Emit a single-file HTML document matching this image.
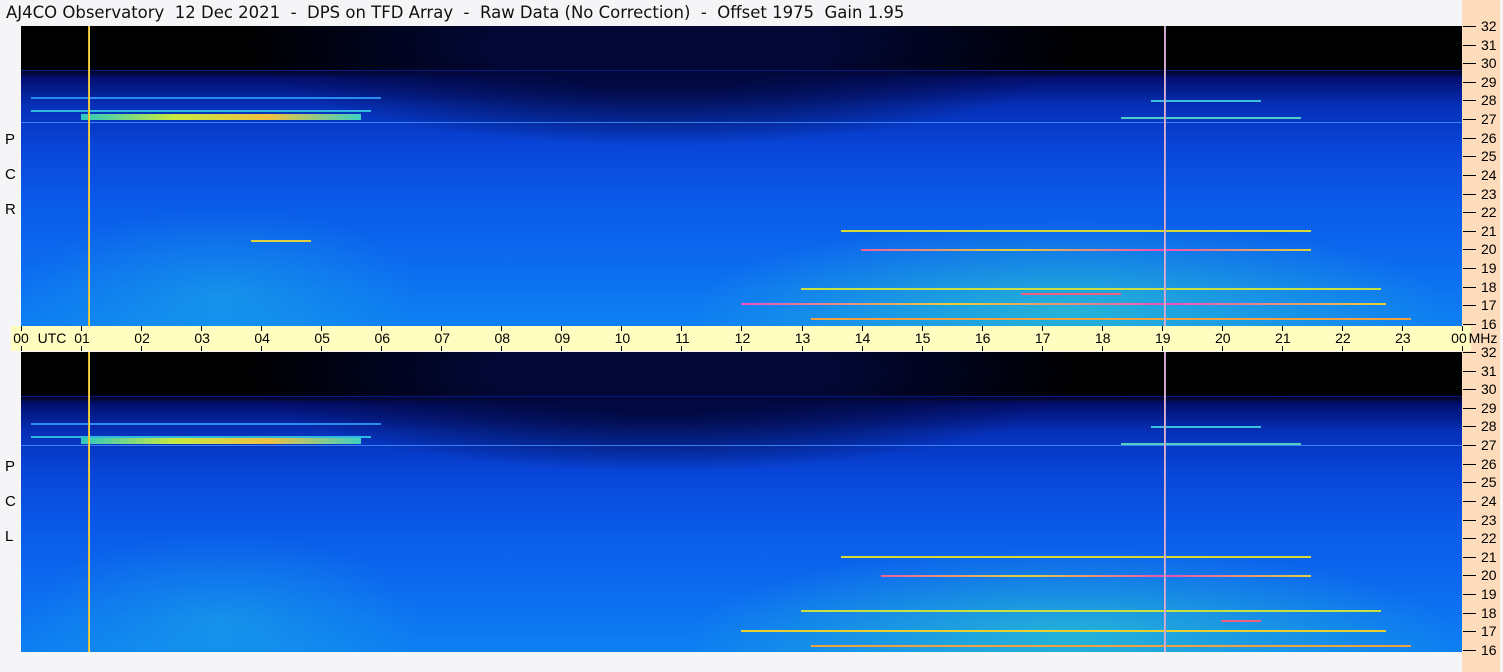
<!DOCTYPE html><html><head><style>
body{margin:0;width:1503px;height:672px;background:#f5f5f8;position:relative;overflow:hidden;font-family:"Liberation Sans","DejaVu Sans",sans-serif}
.t{position:absolute;left:6px;top:3px;font-size:17px;color:#111;white-space:pre;font-family:"DejaVu Sans",sans-serif;transform:scaleX(0.97);transform-origin:left}
.p{position:absolute;left:21px;width:1441px;height:300px;overflow:hidden;
background:
radial-gradient(ellipse 380px 90px at 1050px 285px,rgba(60,235,190,.5),transparent),
radial-gradient(ellipse 200px 90px at 200px 270px,rgba(40,210,220,.3),transparent),
radial-gradient(ellipse 420px 100px at 640px 20px,rgba(2,8,60,.9) 40%,rgba(2,20,120,0) 100%),
radial-gradient(ellipse 330px 45px at 1180px 0px,#000 70%,rgba(0,0,0,0)),
linear-gradient(to bottom,#000 0,#000 42px,#030f70 52px,#0630b8 80px,#0845d8 120px,#0a58e8 170px,#0c6cf0 240px,#0e80f2 300px)}
.h{position:absolute;height:2px}
.v{position:absolute;top:0;width:2px;height:300px}
.r{position:absolute;left:1462px;top:0;width:38px;height:672px;background:#fddcbc}
.yb{position:absolute;left:11px;top:326px;width:1460px;height:25px;background:#fffdc0}
.lab{position:absolute;font-size:14px;color:#000;transform:translateX(-50%)}
.tk{position:absolute;width:1px;background:#000}
.fl{position:absolute;left:1481px;font-size:14px;color:#000}
.ft{position:absolute;left:1463px;width:13px;height:1px;background:#000}
.s{position:absolute;left:5px;font-size:15px;color:#000}
</style></head><body>
<div class="t">AJ4CO Observatory  12 Dec 2021  -  DPS on TFD Array  -  Raw Data (No Correction)  -  Offset 1975  Gain 1.95</div>
<div class="r"></div>
<div class="yb"></div>

<div class="p" style="top:26px">
<div class="h" style="top:44px;left:0;width:1441px;height:1px;background:#0a1a80"></div>
<div class="h" style="top:71px;left:10px;width:350px;background:#2a8cf0"></div>
<div class="h" style="top:84px;left:10px;width:340px;background:#30b8e0"></div>
<div class="h" style="top:88px;left:60px;width:280px;height:6px;background:linear-gradient(90deg,#30c8c0,#c8e840,#f0c040,#40d0c0)"></div>
<div class="h" style="top:96px;left:0;width:1441px;height:1px;background:#3a80f0"></div>
<div class="h" style="top:74px;left:1130px;width:110px;background:#3cc0e0"></div>
<div class="h" style="top:91px;left:1100px;width:180px;background:#50d0c0"></div>
<div class="h" style="top:204px;left:820px;width:470px;background:#d8d830"></div>
<div class="h" style="top:223px;left:840px;width:450px;background:linear-gradient(90deg,#f060a0,#e0d040,#f050b0,#e0d040)"></div>
<div class="h" style="top:262px;left:780px;width:580px;background:#c8e040"></div>
<div class="h" style="top:267px;left:1000px;width:100px;background:#f06080"></div>
<div class="h" style="top:277px;left:720px;width:645px;background:linear-gradient(90deg,#f050c0,#e8d030,#f050c0,#e8d030)"></div>
<div class="h" style="top:292px;left:790px;width:600px;background:#f0a040"></div>
<div class="h" style="top:214px;left:230px;width:60px;background:#e0d040"></div>
<div class="v" style="left:67px;background:linear-gradient(90deg,#f0a020,#e0f060)"></div>
<div class="v" style="left:1143px;background:linear-gradient(90deg,#f8b0a0,#a0a0ff)"></div>
</div>

<div class="p" style="top:352px">
<div class="h" style="top:44px;left:0;width:1441px;height:1px;background:#0a1a80"></div>
<div class="h" style="top:71px;left:10px;width:350px;background:#2a8cf0"></div>
<div class="h" style="top:84px;left:10px;width:340px;background:#30b8e0"></div>
<div class="h" style="top:86px;left:60px;width:280px;height:6px;background:linear-gradient(90deg,#30c8c0,#c8e840,#f0c040,#40d0c0)"></div>
<div class="h" style="top:93px;left:0;width:1441px;height:1px;background:#3a80f0"></div>
<div class="h" style="top:74px;left:1130px;width:110px;background:#3cc0e0"></div>
<div class="h" style="top:91px;left:1100px;width:180px;background:#50d0c0"></div>
<div class="h" style="top:204px;left:820px;width:470px;background:#d8d830"></div>
<div class="h" style="top:223px;left:860px;width:430px;background:linear-gradient(90deg,#f060a0,#e0d040,#f050b0,#e0d040)"></div>
<div class="h" style="top:258px;left:780px;width:580px;background:#c8e040"></div>
<div class="h" style="top:268px;left:1200px;width:40px;background:#f06080"></div>
<div class="h" style="top:278px;left:720px;width:645px;background:#e8d030"></div>
<div class="h" style="top:293px;left:790px;width:600px;background:#f0a040"></div>
<div class="v" style="left:67px;background:linear-gradient(90deg,#f0a020,#e0f060)"></div>
<div class="v" style="left:1143px;background:linear-gradient(90deg,#f8b0a0,#a0a0ff)"></div>
</div>

<div class="s" style="top:131px">P</div><div class="s" style="top:166px">C</div><div class="s" style="top:201px">R</div>
<div class="s" style="top:458px">P</div><div class="s" style="top:493px">C</div><div class="s" style="top:528px">L</div>

<div id="ax"></div>
<script>
var ax=document.getElementById('ax'),h='';
for(var i=0;i<=24;i++){var x=21+i*60.04;
h+='<div class="tk" style="left:'+x.toFixed(0)+'px;top:326px;height:5px"></div><div class="tk" style="left:'+x.toFixed(0)+'px;top:346px;height:5px"></div>';
var l=(i%24<10?'0':'')+(i%24);
if(i==0)h+='<div class="lab" style="left:'+(x)+'px;top:330px">00</div><div class="lab" style="left:52px;top:330px">UTC</div>';
else if(i==24)h+='<div class="lab" style="left:'+(x-3)+'px;top:330px">00</div><div class="lab" style="left:1483px;top:330px">MHz</div>';
else h+='<div class="lab" style="left:'+(x+1)+'px;top:330px">'+l+'</div>';}
for(var p=0;p<2;p++)for(var j=0;j<=16;j++){var y=26+p*326+j*18.62;
h+='<div class="ft" style="top:'+y.toFixed(0)+'px"></div><div class="fl" style="top:'+(y-8).toFixed(0)+'px">'+(32-j)+'</div>';}
ax.innerHTML=h;
</script>
</body></html>
